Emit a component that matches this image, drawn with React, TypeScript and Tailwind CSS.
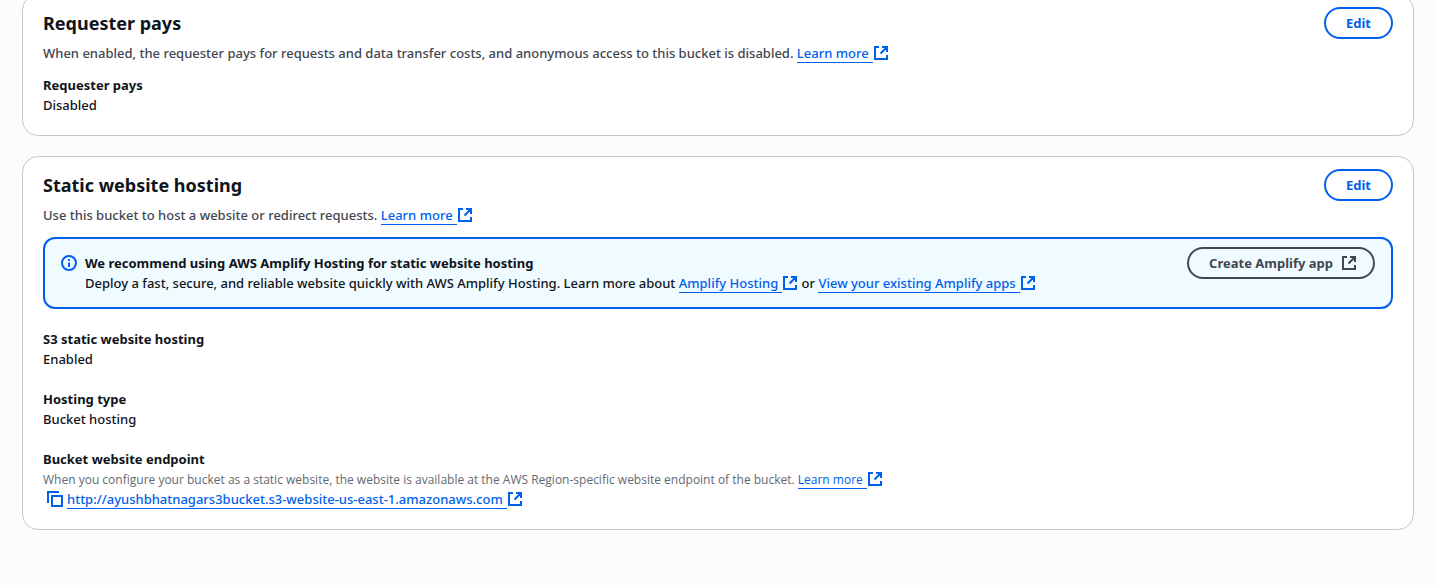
import type { ReactNode } from "react";

function ExternalIcon() {
  return (
    <svg viewBox="0 0 16 16" className="inline-block size-4 align-[-3px]" fill="none" stroke="currentColor" strokeWidth="2" aria-hidden="true">
      <path d="M6 2H2v12h12v-4M9 2h5v5M14 2L7.5 8.5" />
    </svg>
  );
}

function ExternalLink({ children }: { children: ReactNode }) {
  return (
    <a href="#" className="font-medium text-[#0060eb]">
      <span className="border-b border-current pr-1">{children}</span>
      <ExternalIcon />
    </a>
  );
}

function Field({ label, children }: { label: string; children: ReactNode }) {
  return (
    <div>
      <dt className="font-bold">{label}</dt>
      <dd>{children}</dd>
    </div>
  );
}

function Card({ title, description, children }: { title: string; description: string; children: ReactNode }) {
  return (
    <section className="rounded-2xl border border-[#c6c6cd] bg-white px-5 pt-3 pb-5">
      <header className="flex items-start justify-between">
        <div>
          <h2 className="pt-1 text-lg leading-6 font-bold">{title}</h2>
          <p className="mt-2 text-[#424650]">
            {description} <ExternalLink>Learn more</ExternalLink>
          </p>
        </div>
        <button type="button" className="h-8 rounded-full border-2 border-[#0060eb] px-5 font-bold text-[#0060eb]">
          Edit
        </button>
      </header>
      {children}
    </section>
  );
}

export default function App() {
  return (
    <div className="min-h-screen overflow-hidden bg-[#fcfcfd] font-['Noto_Sans',sans-serif] text-[13px] leading-5 font-medium text-[#0f141a]">
      <main className="-mt-1.5 ml-[22px] mr-[23px] flex flex-col gap-5">
        <Card title="Requester pays" description="When enabled, the requester pays for requests and data transfer costs, and anonymous access to this bucket is disabled.">
          <dl className="mt-3">
            <Field label="Requester pays">Disabled</Field>
          </dl>
        </Card>
        <Card title="Static website hosting" description="Use this bucket to host a website or redirect requests.">
          <div className="mt-3 flex items-start justify-between rounded-xl border-2 border-[#0060eb] bg-[#f0fbff] px-4 pt-2 pb-3.5">
            <div className="flex gap-2 pt-1.5">
              <svg viewBox="0 0 16 16" className="mt-0.5 size-4 shrink-0 text-[#0060eb]" fill="none" stroke="currentColor" strokeWidth="2" aria-hidden="true">
                <circle cx="8" cy="8" r="7" />
                <path d="M8 12V7.5M8 6V4" />
              </svg>
              <div>
                <p className="font-bold">We recommend using AWS Amplify Hosting for static website hosting</p>
                <p>
                  Deploy a fast, secure, and reliable website quickly with AWS Amplify Hosting. Learn more about <ExternalLink>Amplify Hosting</ExternalLink> or <ExternalLink>View your existing Amplify apps</ExternalLink>
                </p>
              </div>
            </div>
            <button type="button" className="flex h-8 items-center gap-2 rounded-full border-2 border-[#424650] pr-4 pl-5 font-bold text-[#424650]">
              Create Amplify app
              <ExternalIcon />
            </button>
          </div>
          <dl className="mt-5 flex flex-col gap-5">
            <Field label="S3 static website hosting">Enabled</Field>
            <Field label="Hosting type">Bucket hosting</Field>
            <Field label="Bucket website endpoint">
              <p className="pt-0.5 font-['Open_Sans',sans-serif] text-xs leading-[18px] font-normal text-[#656871]">
                When you configure your bucket as a static website, the website is available at the AWS Region-specific website endpoint of the bucket.{" "}
                <ExternalLink>Learn more</ExternalLink>
              </p>
              <div className="flex items-center gap-1 pl-1">
                <button type="button" aria-label="Copy endpoint" className="text-[#0060eb]">
                  <svg viewBox="0 0 16 16" className="block size-4" fill="none" stroke="currentColor" strokeWidth="2" aria-hidden="true">
                    <path d="M5 5h10v10H5zM1 12V1h11" />
                  </svg>
                </button>
                <ExternalLink>http://ayushbhatnagars3bucket.s3-website-us-east-1.amazonaws.com</ExternalLink>
              </div>
            </Field>
          </dl>
        </Card>
      </main>
    </div>
  );
}
